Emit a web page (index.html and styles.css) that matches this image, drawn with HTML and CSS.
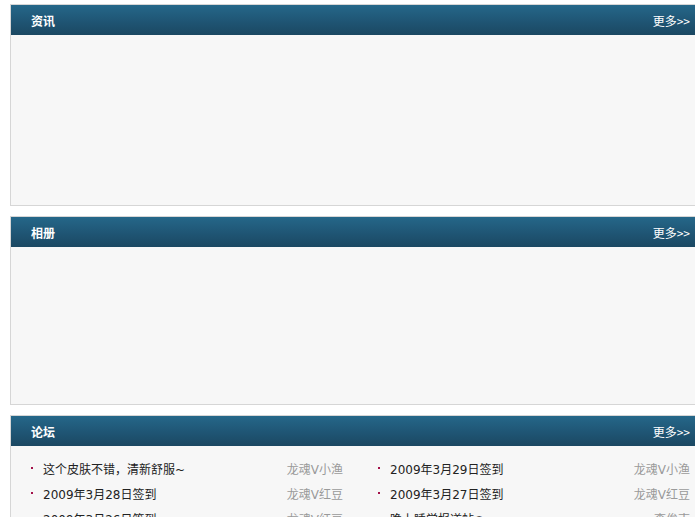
FILE: index.html
```html
<!DOCTYPE html>
<html lang="zh">
<head>
<meta charset="utf-8">
<title>首页</title>
<link rel="stylesheet" href="styles.css">
</head>
<body>
<div class="page">
  <section class="panel">
    <div class="panel-head"><h2 class="panel-title">资讯</h2><a class="more" href="#">更多&gt;&gt;</a></div>
    <div class="panel-body body-news"></div>
  </section>
  <section class="panel">
    <div class="panel-head"><h2 class="panel-title">相册</h2><a class="more" href="#">更多&gt;&gt;</a></div>
    <div class="panel-body body-album"></div>
  </section>
  <section class="panel">
    <div class="panel-head"><h2 class="panel-title">论坛</h2><a class="more" href="#">更多&gt;&gt;</a></div>
    <div class="panel-body body-forum">
      <ul class="topics">
        <li class="topic"><span class="topic-title">这个皮肤不错，清新舒服~</span><span class="topic-author">龙魂V小渔</span></li>
        <li class="topic"><span class="topic-title">2009年3月29日签到</span><span class="topic-author">龙魂V小渔</span></li>
        <li class="topic"><span class="topic-title">2009年3月28日签到</span><span class="topic-author">龙魂V红豆</span></li>
        <li class="topic"><span class="topic-title">2009年3月27日签到</span><span class="topic-author">龙魂V红豆</span></li>
        <li class="topic"><span class="topic-title">2009年3月26日签到</span><span class="topic-author">龙魂V红豆</span></li>
        <li class="topic"><span class="topic-title">晚上睡觉报道帖●</span><span class="topic-author">李俊南</span></li>
      </ul>
    </div>
  </section>
</div>
</body>
</html>
```
FILE: styles.css
```css
html, body {
  margin: 0;
  padding: 0;
  background: #ffffff;
  overflow: hidden;
}
body {
  font-family: "DejaVu Sans", "Noto Sans CJK SC", sans-serif;
  font-size: 12px;
  color: #333333;
}
.page {
  padding: 4px 0 0 10px;
  width: 700px;
}
.panel {
  width: 700px;
  border: 1px solid #d6d6d6;
  margin-bottom: 10px;
  background: #f7f7f7;
}
.panel-head {
  height: 30px;
  display: flex;
  align-items: center;
  justify-content: space-between;
  padding: 0 21px 0 20px;
  background: linear-gradient(to bottom, #256789 0%, #1f5574 55%, #1b4862 100%);
}
.panel-title {
  margin: 0;
  font-size: 12px;
  font-weight: bold;
  color: #ffffff;
  font-family: "Noto Sans CJK SC", sans-serif;
}
.more {
  color: #ffffff;
  text-decoration: none;
  font-size: 12px;
  font-family: "Noto Sans CJK SC", sans-serif;
}
.body-news {
  height: 170px;
}
.body-album {
  height: 157px;
}
.body-forum {
  padding: 10px 0 0 20px;
}
.topics {
  list-style: none;
  margin: 0;
  padding: 0;
  display: grid;
  grid-template-columns: 312px 312px;
  column-gap: 35px;
}
.topic {
  display: flex;
  justify-content: space-between;
  align-items: center;
  height: 25px;
  position: relative;
  padding-left: 12px;
}
.topic::before {
  content: "";
  position: absolute;
  left: 0;
  top: 11px;
  width: 2px;
  height: 2px;
  background: #a3124a;
}
.topic-title {
  color: #222222;
}
.topic-author {
  color: #9a9a9a;
}
```
